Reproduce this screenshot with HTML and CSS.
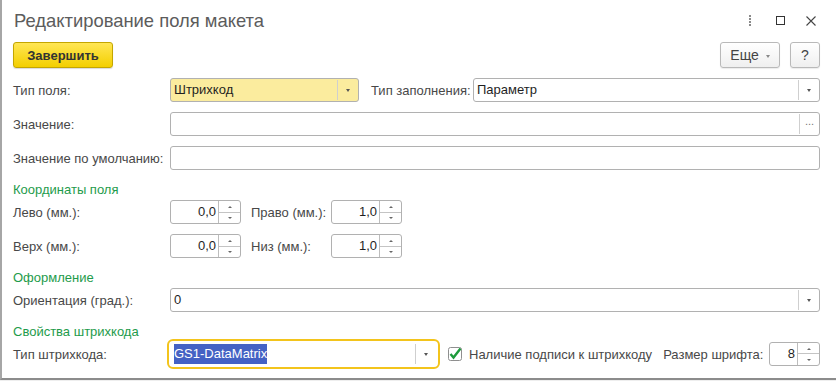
FILE: index.html
```html
<!DOCTYPE html>
<html lang="ru">
<head>
    <meta charset="UTF-8">
    <meta name="viewport" content="width=device-width, initial-scale=1.0">
    <title>Редактирование поля макета</title>
    <link rel="stylesheet" href="styles.css">
</head>
<body>
    <div class="window">
        <div class="window-header">
            <h1 class="window-title">Редактирование поля макета</h1>
            <div class="window-icons">
                <svg class="icon icon-more" width="14" height="14" viewBox="0 0 14 14">
                    <rect x="6" y="1" width="2" height="2" fill="#8a8a8a"/>
                    <rect x="6" y="4" width="2" height="2" fill="#8a8a8a"/>
                    <rect x="6" y="7" width="2" height="2" fill="#8a8a8a"/>
                    <rect x="6" y="10" width="2" height="2" fill="#8a8a8a"/>
                </svg>
                <svg class="icon icon-max" width="14" height="14" viewBox="0 0 14 14">
                    <rect x="2.5" y="2.5" width="8" height="8" fill="none" stroke="#333" stroke-width="1"/>
                </svg>
                <svg class="icon icon-close" width="14" height="14" viewBox="0 0 14 14">
                    <path d="M2.5 2.5 L11.5 11.5 M11.5 2.5 L2.5 11.5" stroke="#444" stroke-width="1.1" fill="none"/>
                </svg>
            </div>
        </div>

        <div class="toolbar">
            <button class="btn btn-primary">Завершить</button>
            <div class="toolbar-right">
                <button class="btn btn-more">Еще <span class="arrow-down"></span></button>
                <button class="btn btn-help">?</button>
            </div>
        </div>

        <div class="form">
            <div class="row">
                <div class="label">Тип поля:</div>
                <div class="field field-type highlighted">
                    <div class="value">Штрихкод</div>
                    <div class="field-btn"><span class="arrow-down"></span></div>
                </div>
                <div class="label label-fill">Тип заполнения:</div>
                <div class="field grow">
                    <div class="value">Параметр</div>
                    <div class="field-btn"><span class="arrow-down"></span></div>
                </div>
            </div>

            <div class="row">
                <div class="label">Значение:</div>
                <div class="field grow">
                    <div class="value"></div>
                    <div class="field-btn dots">...</div>
                </div>
            </div>

            <div class="row">
                <div class="label">Значение по умолчанию:</div>
                <div class="field grow">
                    <div class="value"></div>
                </div>
            </div>

            <div class="group-title">Координаты поля</div>

            <div class="row">
                <div class="label">Лево (мм.):</div>
                <div class="field field-num">
                    <div class="value num">0,0</div>
                    <div class="spin"><span class="arrow-up"></span><span class="arrow-down small"></span></div>
                </div>
                <div class="label label-side">Право (мм.):</div>
                <div class="field field-num">
                    <div class="value num">1,0</div>
                    <div class="spin"><span class="arrow-up"></span><span class="arrow-down small"></span></div>
                </div>
            </div>

            <div class="row">
                <div class="label">Верх (мм.):</div>
                <div class="field field-num">
                    <div class="value num">0,0</div>
                    <div class="spin"><span class="arrow-up"></span><span class="arrow-down small"></span></div>
                </div>
                <div class="label label-side">Низ (мм.):</div>
                <div class="field field-num">
                    <div class="value num">1,0</div>
                    <div class="spin"><span class="arrow-up"></span><span class="arrow-down small"></span></div>
                </div>
            </div>

            <div class="group-title">Оформление</div>

            <div class="row">
                <div class="label">Ориентация (град.):</div>
                <div class="field grow">
                    <div class="value">0</div>
                    <div class="field-btn"><span class="arrow-down"></span></div>
                </div>
            </div>

            <div class="group-title">Свойства штрихкода</div>

            <div class="row">
                <div class="label">Тип штрихкода:</div>
                <div class="field field-barcode focused">
                    <div class="value"><span class="selected">GS1-DataMatrix</span></div>
                    <div class="field-btn"><span class="arrow-down"></span></div>
                </div>
                <div class="checkbox">
                    <svg width="14" height="14" viewBox="0 0 14 14">
                        <rect x="0.5" y="0.5" width="13" height="13" rx="2" fill="#fff" stroke="#8f8f8f"/>
                        <path d="M2.5 7 L5.5 10.5 L12.5 1.5" stroke="#1e9b3c" stroke-width="2.4" fill="none"/>
                    </svg>
                </div>
                <div class="check-label">Наличие подписи к штрихкоду</div>
                <div class="label-font">Размер шрифта:</div>
                <div class="field field-small">
                    <div class="value num">8</div>
                    <div class="spin"><span class="arrow-up"></span><span class="arrow-down small"></span></div>
                </div>
            </div>
        </div>
    </div>
</body>
</html>
```

FILE: styles.css
```css
body {
    margin: 0;
    padding: 0;
    background-color: #eeeeee;
    font-family: "Liberation Sans", Arial, sans-serif;
    font-size: 13px;
    color: #484848;
}

.window {
    width: 836px;
    height: 378px;
    box-sizing: content-box;
    background: #fff;
    border-left: 2px solid #a6a6a6;
    border-bottom: 2px solid #8c8c8c;
}

.window-header {
    display: flex;
    align-items: center;
    height: 42px;
    padding: 0 11px 0 12px;
    box-sizing: border-box;
}

.window-title {
    margin: 0;
    flex: 1;
    font-size: 18.4px;
    font-weight: normal;
    line-height: 20px;
    color: #5c5c5c;
    padding-bottom: 1px;
}

.window-icons {
    display: flex;
    align-items: center;
    margin-right: 9px;
}

.icon {
    display: block;
}

.icon-max {
    margin-left: 17px;
}

.icon-close {
    margin-left: 16px;
}

.toolbar {
    display: flex;
    align-items: center;
    padding: 0 18px 0 11px;
    height: 26px;
}

.toolbar-right {
    margin-left: auto;
    display: flex;
    gap: 10px;
}

.btn {
    height: 26px;
    box-sizing: border-box;
    border-radius: 3px;
    font-family: "Liberation Sans", Arial, sans-serif;
    font-size: 13px;
    padding: 0;
    cursor: pointer;
}

.btn-primary {
    width: 100px;
    font-weight: bold;
    color: #333;
    background: linear-gradient(#ffe654, #f3cf00);
    border: 1px solid #c4a600;
    box-shadow: 0 1px 1px rgba(0, 0, 0, 0.15);
}

.btn-more,
.btn-help {
    background: linear-gradient(#ffffff, #efefef);
    border: 1px solid #b9b9b9;
    color: #444;
    box-shadow: 0 1px 1px rgba(0, 0, 0, 0.08);
}

.btn-more {
    width: 60px;
    font-size: 14px;
}

.btn-more .arrow-down {
    margin-left: 3px;
    vertical-align: middle;
    border-top-color: #888;
}

.btn-help {
    width: 30px;
    font-size: 14px;
}

/* flex column: margins of rows and group titles add up, no collapsing */
.form {
    display: flex;
    flex-direction: column;
    padding: 10px 18px 0 11px;
}

.row {
    display: flex;
    align-items: center;
    height: 24px;
    margin-bottom: 10px;
}

.label {
    width: 157px;
    flex-shrink: 0;
    white-space: nowrap;
}

.label-fill {
    width: 102px;
    margin-left: 12px;
}

.label-side {
    width: 80px;
    margin-left: 10px;
}

.group-title {
    color: #1e9b4b;
    line-height: 16px;
    height: 16px;
    margin-top: 2px;
    margin-bottom: 2px;
}

.field {
    display: flex;
    height: 24px;
    box-sizing: border-box;
    border: 1px solid #b1b1b1;
    border-radius: 3px;
    background: #fff;
    color: #1f1f1f;
}

.field.grow {
    flex: 1;
}

.field.highlighted {
    background: #fbec9e;
}

.field-type {
    width: 189px;
}

.field-num {
    width: 71px;
}

.field-small {
    width: 51px;
    margin-left: auto;
}

.field-barcode {
    width: 267px;
    border-color: #fff;
    outline: 2px solid #f3c41c;
    outline-offset: 1px;
    margin-right: 12px;
}

.value {
    flex: 1;
    padding: 0 3px;
    line-height: 22px;
    white-space: nowrap;
    overflow: hidden;
}

.value.num {
    text-align: right;
    padding-right: 2px;
}

.selected {
    background: #4462c4;
    color: #fff;
    padding: 2px 0 3px;
}

.field-btn {
    width: 20px;
    border-left: 1px solid #cfcfcf;
    margin: 1px 0;
    display: flex;
    align-items: center;
    justify-content: center;
}

.field-btn.dots {
    color: #777;
    font-size: 11px;
    line-height: 18px;
    align-items: flex-end;
    padding-bottom: 4px;
    box-sizing: border-box;
}

.arrow-down {
    display: inline-block;
    width: 0;
    height: 0;
    border-left: 2.5px solid transparent;
    border-right: 2.5px solid transparent;
    border-top: 3px solid #555;
}

.arrow-up {
    display: inline-block;
    width: 0;
    height: 0;
    border-left: 2px solid transparent;
    border-right: 2px solid transparent;
    border-bottom: 2px solid #666;
}

.arrow-down.small {
    border-left-width: 2px;
    border-right-width: 2px;
    border-top-width: 2px;
    border-top-color: #666;
}

.spin {
    width: 21px;
    border-left: 1px solid #bdbdbd;
    display: flex;
    flex-direction: column;
    align-items: center;
    justify-content: space-around;
    background: linear-gradient(transparent 10.5px, #c4c4c4 10.5px, #c4c4c4 11.5px, transparent 11.5px);
}

.checkbox {
    width: 14px;
    height: 14px;
    margin-left: -1px;
}

.checkbox svg {
    display: block;
}

.check-label {
    margin-left: 7px;
    white-space: nowrap;
}

.label-font {
    margin-left: 11px;
    white-space: nowrap;
}
```
